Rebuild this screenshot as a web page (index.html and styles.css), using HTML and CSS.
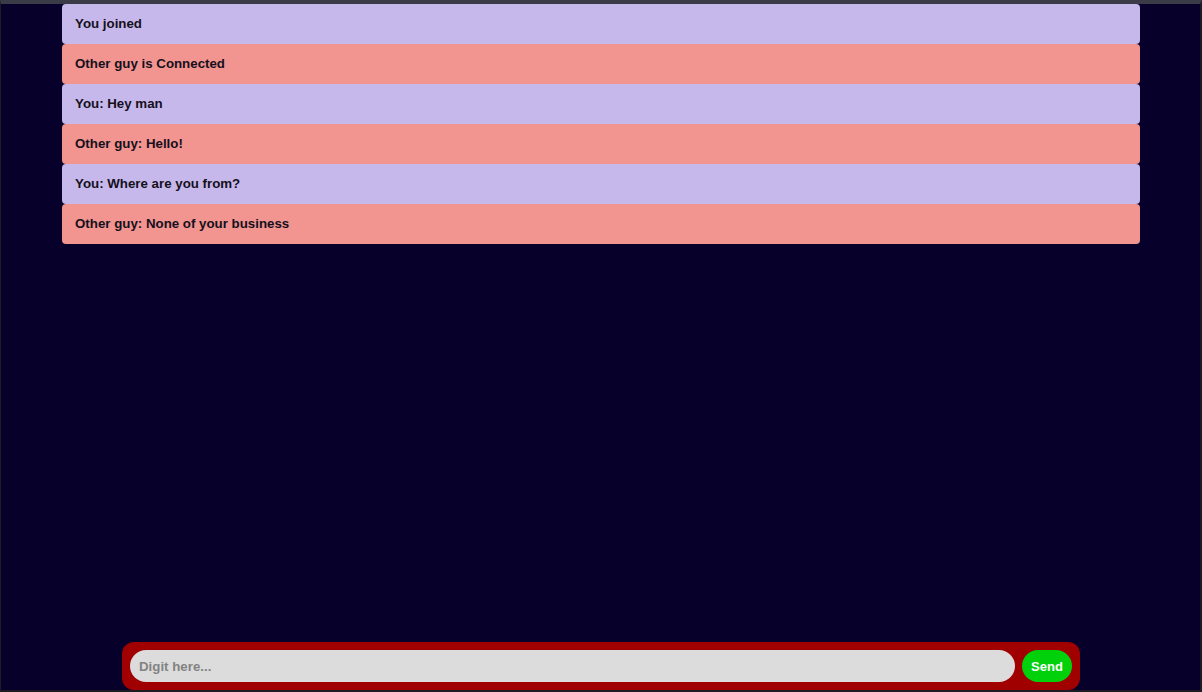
FILE: index.html
```html
<!DOCTYPE html>
<html>
<head>
<meta charset="utf-8">
<link rel="stylesheet" href="styles.css">
</head>
<body>
<div class="app">
  <ul class="messages">
    <li class="msg mine">You joined</li>
    <li class="msg other">Other guy is Connected</li>
    <li class="msg mine">You: Hey man</li>
    <li class="msg other">Other guy: Hello!</li>
    <li class="msg mine">You: Where are you from?</li>
    <li class="msg other">Other guy: None of your business</li>
  </ul>
  <form class="composer">
    <input class="field" type="text" placeholder="Digit here...">
    <button class="send" type="button">Send</button>
  </form>
</div>
</body>
</html>
```
FILE: styles.css
```css
html, body {
  margin: 0;
  padding: 0;
  height: 100%;
}
body {
  background: #07002a;
  font-family: "Liberation Sans", Arial, sans-serif;
  overflow: hidden;
}
.app {
  height: 100%;
  box-sizing: border-box;
  border-top: 4px solid #3b3b47;
  border-left: 1px solid #1c1c24;
  border-right: 2px solid #1c1c24;
  border-bottom: 2px solid #1c1c22;
  display: flex;
  flex-direction: column;
}
.messages {
  list-style: none;
  margin: 0 60px 0 61px;
  padding: 0;
  flex: 1;
}
.msg {
  height: 40px;
  box-sizing: border-box;
  display: flex;
  align-items: center;
  padding: 0 13px 1px;
  font-size: 13.3px;
  font-weight: bold;
  color: #15101c;
  border-radius: 4px;
}
.mine { background: #c7b8ec; }
.other { background: #f29490; }
.composer {
  align-self: center;
  width: 958px;
  height: 48px;
  box-sizing: border-box;
  margin: 0 0 0 1px;
  padding: 8px;
  background: #a00000;
  border-radius: 12px;
  display: flex;
  gap: 7px;
}
.field {
  flex: 1;
  height: 32px;
  box-sizing: border-box;
  border: none;
  outline: none;
  border-radius: 16px;
  background: #dcdcdc;
  padding: 0 9px;
  font-family: "Liberation Sans", Arial, sans-serif;
  font-size: 13.3px;
  font-weight: bold;
  color: #333;
}
.field::placeholder {
  color: #838383;
}
.send {
  width: 50px;
  height: 32px;
  border: none;
  border-radius: 16px;
  background: #00d10a;
  color: #fff;
  font-family: "Liberation Sans", Arial, sans-serif;
  font-size: 13px;
  font-weight: bold;
  padding: 0;
}
```
